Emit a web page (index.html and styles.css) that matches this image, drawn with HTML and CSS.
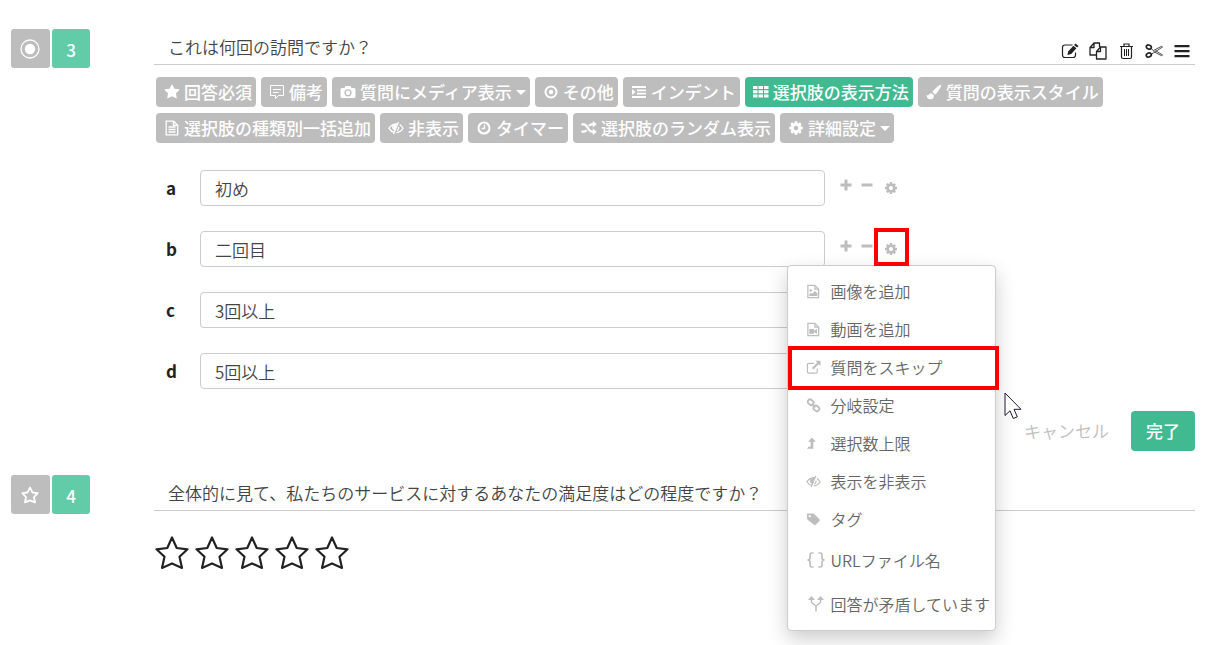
FILE: index.html
```html
<!DOCTYPE html>
<html lang="ja">
<head>
<meta charset="utf-8">
<meta name="viewport" content="width=device-width, initial-scale=1">
<title>アンケート編集</title>
<link rel="stylesheet" href="styles.css">
</head>
<body>
<svg class="sprite" aria-hidden="true">
  <symbol id="i-star" viewBox="0 0 1792 1792"><path fill="currentColor" d="M1728 647q0 22-26 48l-363 354 86 500q1 7 1 20 0 21-10.5 35.5t-30.5 14.5q-19 0-40-12l-449-236-449 236q-22 12-40 12-21 0-31.5-14.5t-10.5-35.5q0-6 2-20l86-500-364-354q-25-27-25-48 0-37 56-46l502-73 225-455q19-41 49-41t49 41l225 455 502 73q56 9 56 46z"/></symbol>
  <symbol id="i-gear" viewBox="0 0 1792 1792"><path fill="currentColor" d="M1152 896q0-106-75-181t-181-75-181 75-75 181 75 181 181 75 181-75 75-181zm512-109v222q0 12-8 23t-20 13l-185 28q-19 54-39 91 35 50 107 138 10 12 10 25t-9 23q-27 37-99 108t-94 71q-12 0-26-9l-138-108q-44 23-91 38-16 136-29 186-7 28-36 28h-222q-14 0-24.5-8.5t-11.5-21.5l-28-184q-49-16-90-37l-141 107q-10 9-25 9-14 0-25-11-126-114-165-168-7-10-7-23 0-12 8-23 15-21 51-66.5t54-70.5q-27-50-41-99l-183-27q-13-2-21-12.5t-8-23.5v-222q0-12 8-23t19-13l186-28q14-46 39-92-40-57-107-138-10-12-10-24 0-10 9-23 26-36 98.5-107.5t94.5-71.5q13 0 26 10l138 107q44-23 91-38 16-136 29-186 7-28 36-28h222q14 0 24.5 8.5t11.5 21.5l28 184q49 16 90 37l142-107q9-9 24-9 13 0 25 10 129 119 165 170 7 8 7 22 0 12-8 23-15 21-51 66.5t-54 70.5q26 50 41 98l183 28q13 2 21 12.5t8 23.5z"/></symbol>
  <symbol id="i-star-line" viewBox="0 0 34 34"><path fill="none" stroke="currentColor" stroke-width="2.200" stroke-linejoin="round" d="M17 1.500l4.700 10.500L32.500 13.300l-8 7.400 2.500 11.200L17 27.400l-10 4.500 2.500-11.200-8-7.400L12.300 12z"/></symbol>
  <symbol id="i-star-bold" viewBox="0 0 34 34"><path fill="none" stroke="currentColor" stroke-width="3.500" stroke-linejoin="round" d="M17 3l4.700 9.200L31.500 13.500l-7 7.600 2 10L17 27l-9.500 4.100 2-10-7-7.600 9.800-1.300z"/></symbol>
  <symbol id="i-note" viewBox="0 0 16 16"><g fill="none" stroke="currentColor"><path d="M1.500 1.500h13v10H9.500l-3 3v-3h-5z"/><path d="M4 5.500h8M4 8.500h5.500"/></g></symbol>
  <symbol id="i-camera" viewBox="0 0 16 16"><path fill="currentColor" fill-rule="evenodd" d="M5.500 2h5l1 2H14q1.500 0 1.500 1.500v7Q15.500 14 14 14H2Q.5 14 .5 12.500v-7Q.5 4 2 4h2.500zM8 5.200a3.600 3.600 0 1 0 0 7.200 3.600 3.600 0 0 0 0-7.200zm0 1.300a2.300 2.300 0 1 1 0 4.600 2.300 2.300 0 0 1 0-4.600z"/></symbol>
  <symbol id="i-dot" viewBox="0 0 16 16"><circle cx="8" cy="8" r="5.500" fill="none" stroke="currentColor" stroke-width="2"/><circle cx="8" cy="8" r="2.200" fill="currentColor"/></symbol>
  <symbol id="i-indent" viewBox="0 0 16 16"><path fill="currentColor" d="M1 2h14v2H1zM6 5.500h9v1.800H6zM6 8.800h9v1.800H6zM1 12h14v2H1zM1 5l3.500 3L1 11z"/></symbol>
  <symbol id="i-grid" viewBox="0 0 16 16"><path fill="currentColor" d="M0 2h4.500v3H0zM5.500 2H10v3H5.500zM11 2h4.500v3H11zM0 6.300h4.500v3H0zM5.500 6.300H10v3H5.500zM11 6.300h4.500v3H11zM0 10.600h4.500v3H0zM5.500 10.600H10v3H5.500zM11 10.600h4.500v3H11z"/></symbol>
  <symbol id="i-brush" viewBox="0 0 16 16"><path fill="currentColor" d="M14.600.8q1 .7.300 2.200l-4 6q-.8 1.200-2 1.500L6.500 8.300q.2-1.100 1.200-2l5.300-5q.9-.9 1.600-.5zM5.600 9.200l2.500 2.400q0 3.600-3.700 3.600Q.8 15.200.5 11q1.100.8 1.800.2.800-2 3.300-2z"/></symbol>
  <symbol id="i-doc" viewBox="0 0 16 16"><path fill="none" stroke="currentColor" stroke-width="1.300" d="M2.200 1.200h7.500l4 4v9.600H2.200zM9.500 1.200v4.200h4.200M4.500 7h7M4.500 9.500h7M4.500 12h7"/></symbol>
  <symbol id="i-eye" viewBox="0 0 16 16"><path fill="none" stroke="currentColor" stroke-width="1.300" d="M6.200 12.300Q3 11.500 1 8.300 3.200 4.200 8 3.800l1.800.2M11.600 4.700q2 1 3.400 3.600-2.100 4-6.700 4.300M10.500 2L5.500 14M5 5.500q-1 3 1.700 4.500M10.700 7q.4 2.300-1.600 3.600"/><path fill="currentColor" d="M5.500 5q2-1.300 3.300-.5L7.300 10Q4.600 8.500 5.500 5z"/></symbol>
  <symbol id="i-clock" viewBox="0 0 16 16"><circle cx="8" cy="8" r="5.500" fill="none" stroke="currentColor" stroke-width="2.200"/><path fill="none" stroke="currentColor" stroke-width="1.300" d="M8.500 4.800v3.700H5.500"/></symbol>
  <symbol id="i-shuffle" viewBox="0 0 16 16"><path fill="none" stroke="currentColor" stroke-width="2.200" d="M.5 4.300H3C6.500 4.300 7 11.700 11 11.700h2M.5 11.700H3q1.500 0 2.500-1.700M8 6q1-1.700 3-1.700h2"/><path fill="currentColor" d="M11.800 1l4 3.300-4 3.300zM11.800 8.400l4 3.300-4 3.300z"/></symbol>
  <symbol id="i-edit" viewBox="0 0 18 18"><path fill="none" stroke="currentColor" stroke-width="1.200" d="M11.500 3H4Q1.500 3 1.500 5.500V13q0 2.500 2.500 2.500h8q2.500 0 2.500-2.500v-2.500"/><path fill="currentColor" d="M14.500 1.500l3 2.500-1.400 1.600-3-2.500zM12.400 3.800l3 2.500-5.200 5.700-3.700 1 .6-3.600z"/></symbol>
  <symbol id="i-copy" viewBox="0 0 18 18"><path fill="none" stroke="currentColor" stroke-width="1.300" stroke-linejoin="round" d="M7 13H1V5.500L5 1h5.500v4M5 1v4.500H1M11.500 5H17v12H7.500V9.500zM11.500 5v4.500h-4"/></symbol>
  <symbol id="i-trash" viewBox="0 0 18 18"><path fill="none" stroke="currentColor" stroke-width="1.200" d="M3 4.500h13M4.500 4.500V15q0 1.500 1.500 1.500h7q1.500 0 1.500-1.500V4.500M7 4.300V2h5v2.300"/><path fill="none" stroke="currentColor" d="M7.500 7v7M9.500 7v7M11.500 7v7"/></symbol>
  <symbol id="i-cut" viewBox="0 0 18 18"><g fill="none" stroke="currentColor"><ellipse cx="3.800" cy="5" rx="2.600" ry="2" stroke-width="1.700" transform="rotate(25 3.800 5)"/><ellipse cx="3.800" cy="13" rx="2.600" ry="2" stroke-width="1.700" transform="rotate(-25 3.800 13)"/><path stroke-width=".8" d="M6 6.500l2.500 2 8-4.200 1 .7-9 6-2.500 1.200M8.500 9.500l8 4.200 1-.7-7-4.500"/></g></symbol>
  <symbol id="i-menu" viewBox="0 0 18 18"><path fill="currentColor" d="M1.500 3h15v2.200h-15zM1.500 8h15v2.200h-15zM1.500 13h15v2.200h-15z"/></symbol>
  <symbol id="i-plus" viewBox="0 0 12 12"><path fill="currentColor" d="M4.500.5h3v4h4v3h-4v4h-3v-4h-4v-3h4z"/></symbol>
  <symbol id="i-minus" viewBox="0 0 12 12"><path fill="currentColor" d="M.5 4.500h11v3H.5z"/></symbol>
  <symbol id="i-image" viewBox="0 0 16 16"><path fill="none" stroke="currentColor" stroke-width="1.300" d="M2 1.500h7.500l4 4v9H2zM9.500 1.500v4h4"/><circle cx="5" cy="7" r="1.300" fill="currentColor"/><path fill="currentColor" d="M3.500 12.800v-2l1.500-1.300 1.500 1 3-3 2.700 2.500v2.800z"/></symbol>
  <symbol id="i-video" viewBox="0 0 16 16"><path fill="none" stroke="currentColor" stroke-width="1.300" d="M2 1.500h7.500l4 4v9H2zM9.500 1.500v4h4"/><path fill="currentColor" d="M3.500 7.500h5v1.800l3.200-2v5.400l-3.200-2v1.800h-5z"/></symbol>
  <symbol id="i-external" viewBox="0 0 16 16"><path fill="none" stroke="currentColor" stroke-width="1.300" d="M8.500 3.500H3Q1.500 3.500 1.500 5v7.500Q1.500 14 3 14h7.500q1.500 0 1.500-1.500V9"/><path fill="currentColor" d="M10 .8h5.500v5.500l-1.900-1.900-5.800 5.800-1.600-1.600L12 2.800z"/></symbol>
  <symbol id="i-link" viewBox="0 0 16 16"><g fill="none" stroke="currentColor" stroke-width="1.900"><rect x="1.500" y="2" width="6.500" height="5" rx="2.400" transform="rotate(40 4.800 4.800)"/><rect x="7.800" y="8.500" width="6.500" height="5" rx="2.400" transform="rotate(40 11 11)"/><path d="M6 6l4 4"/></g></symbol>
  <symbol id="i-up" viewBox="0 0 16 16"><path fill="currentColor" d="M6.300 1.500l4.200 4.700H7.800v7.300H1l1.700-2h2.200V6.200H2.200z"/></symbol>
  <symbol id="i-tag" viewBox="0 0 16 16"><path fill="currentColor" fill-rule="evenodd" d="M1 2.500Q1 1.500 2 1.500h5q1 0 2 1l5.300 5.300q.9.900 0 1.800l-4 4q-.9.900-1.800 0L2 8.500q-1-1-1-2zM4 3.200a1.200 1.200 0 1 0 0 2.400 1.200 1.200 0 0 0 0-2.400z"/></symbol>
  <symbol id="i-braces" viewBox="0 0 20 16"><path fill="none" stroke="currentColor" stroke-width="1.600" d="M7.500 1H6Q4 1 4 3v2.500Q4 8 1.500 8 4 8 4 10.500V13q0 2 2 2h1.500M12.500 1H14q2 0 2 2v2.500Q16 8 18.500 8 16 8 16 10.500V13q0 2-2 2h-1.500"/></symbol>
  <symbol id="i-fork" viewBox="0 0 20 16"><path fill="none" stroke="currentColor" stroke-width="1.500" d="M10 15.500V10L5.500 6.500V3M10 10l4.500-3.500V3"/><path fill="currentColor" d="M5.500 0L9 4H2zM14.500 0L18 4h-7z"/></symbol>
</svg>

<main class="survey">
  <section class="question">
    <div class="badges">
      <span class="badge badge-type"><svg class="badge-radio" viewBox="0 0 20 20"><circle cx="10" cy="10" r="9" fill="none" stroke="currentColor" stroke-width="1.300"/><circle cx="10" cy="10" r="5.200" fill="currentColor"/></svg></span>
      <span class="badge badge-number">3</span>
    </div>
    <div class="content">
      <header class="heading">
        <h2 class="title">これは何回の訪問ですか？</h2>
        <div class="actions">
          <button class="icon-button" type="button" aria-label="編集"><svg><use href="#i-edit"/></svg></button>
          <button class="icon-button" type="button" aria-label="コピー"><svg><use href="#i-copy"/></svg></button>
          <button class="icon-button" type="button" aria-label="削除"><svg><use href="#i-trash"/></svg></button>
          <button class="icon-button" type="button" aria-label="切り取り"><svg><use href="#i-cut"/></svg></button>
          <button class="icon-button" type="button" aria-label="並べ替え"><svg><use href="#i-menu"/></svg></button>
        </div>
      </header>

      <div class="toolbar">
        <button class="tool" type="button"><svg><use href="#i-star"/></svg>回答必須</button>
        <button class="tool" type="button"><svg><use href="#i-note"/></svg>備考</button>
        <button class="tool tool-drop" type="button"><svg><use href="#i-camera"/></svg>質問にメディア表示</button>
        <button class="tool" type="button"><svg><use href="#i-dot"/></svg>その他</button>
        <button class="tool" type="button"><svg><use href="#i-indent"/></svg>インデント</button>
        <button class="tool tool-active" type="button"><svg><use href="#i-grid"/></svg>選択肢の表示方法</button>
        <button class="tool" type="button"><svg><use href="#i-brush"/></svg>質問の表示スタイル</button>
        <button class="tool" type="button"><svg><use href="#i-doc"/></svg>選択肢の種類別一括追加</button>
        <button class="tool" type="button"><svg><use href="#i-eye"/></svg>非表示</button>
        <button class="tool" type="button"><svg><use href="#i-clock"/></svg>タイマー</button>
        <button class="tool" type="button"><svg><use href="#i-shuffle"/></svg>選択肢のランダム表示</button>
        <button class="tool tool-drop" type="button"><svg><use href="#i-gear"/></svg>詳細設定</button>
      </div>

      <div class="options">
        <div class="option">
          <label class="option-label" for="opt-a">a</label>
          <input class="option-input" id="opt-a" type="text" value="初め">
          <div class="option-tools">
            <button class="mini" type="button" aria-label="追加"><svg><use href="#i-plus"/></svg></button>
            <button class="mini" type="button" aria-label="削除"><svg><use href="#i-minus"/></svg></button>
            <button class="mini mini-gear" type="button" aria-label="設定"><svg><use href="#i-gear"/></svg></button>
          </div>
        </div>
        <div class="option">
          <label class="option-label" for="opt-b">b</label>
          <input class="option-input" id="opt-b" type="text" value="二回目">
          <div class="option-tools">
            <button class="mini" type="button" aria-label="追加"><svg><use href="#i-plus"/></svg></button>
            <button class="mini" type="button" aria-label="削除"><svg><use href="#i-minus"/></svg></button>
            <button class="mini mini-gear marked" type="button" aria-label="設定"><svg><use href="#i-gear"/></svg></button>
            <div class="menu">
              <button class="menu-item" type="button"><svg><use href="#i-image"/></svg>画像を追加</button>
              <button class="menu-item" type="button"><svg><use href="#i-video"/></svg>動画を追加</button>
              <button class="menu-item marked" type="button"><svg><use href="#i-external"/></svg>質問をスキップ</button>
              <button class="menu-item" type="button"><svg><use href="#i-link"/></svg>分岐設定</button>
              <button class="menu-item" type="button"><svg><use href="#i-up"/></svg>選択数上限</button>
              <button class="menu-item" type="button"><svg><use href="#i-eye"/></svg>表示を非表示</button>
              <button class="menu-item" type="button"><svg><use href="#i-tag"/></svg>タグ</button>
              <button class="menu-item menu-item-tall" type="button"><svg><use href="#i-braces"/></svg>URLファイル名</button>
              <button class="menu-item menu-item-tall" type="button"><svg><use href="#i-fork"/></svg>回答が矛盾しています</button>
              <svg class="pointer" viewBox="0 0 19 28" aria-hidden="true"><path fill="#fff" stroke="#1a1a2e" d="M1 1v22.500l5-4.700 3.300 7.700 4-1.700-3.300-7.500h7z"/></svg>
            </div>
          </div>
        </div>
        <div class="option">
          <label class="option-label" for="opt-c">c</label>
          <input class="option-input" id="opt-c" type="text" value="3回以上">
        </div>
        <div class="option">
          <label class="option-label" for="opt-d">d</label>
          <input class="option-input" id="opt-d" type="text" value="5回以上">
        </div>
      </div>

      <footer class="footer">
        <button class="cancel" type="button">キャンセル</button>
        <button class="done" type="button">完了</button>
      </footer>
    </div>
  </section>

  <section class="question">
    <div class="badges">
      <span class="badge badge-type"><svg class="badge-star"><use href="#i-star-bold"/></svg></span>
      <span class="badge badge-number">4</span>
    </div>
    <div class="content">
      <header class="heading">
        <h2 class="title">全体的に見て、私たちのサービスに対するあなたの満足度はどの程度ですか？</h2>
      </header>
      <div class="rating">
        <button class="rate" type="button" aria-label="1"><svg><use href="#i-star-line"/></svg></button>
        <button class="rate" type="button" aria-label="2"><svg><use href="#i-star-line"/></svg></button>
        <button class="rate" type="button" aria-label="3"><svg><use href="#i-star-line"/></svg></button>
        <button class="rate" type="button" aria-label="4"><svg><use href="#i-star-line"/></svg></button>
        <button class="rate" type="button" aria-label="5"><svg><use href="#i-star-line"/></svg></button>
      </div>
    </div>
  </section>
</main>
</body>
</html>
```
FILE: styles.css
```css
* {
  box-sizing: border-box;
}

body {
  margin: 0;
  background: #fff;
  color: #444;
  font-family: "Noto Sans CJK JP", "Noto Sans", sans-serif;
  font-size: 17px;
  font-weight: 350;
  line-height: 24px;
}

button,
input {
  margin: 0;
  font: inherit;
}

button {
  padding: 0;
  border: 0;
  background: none;
  color: inherit;
  cursor: pointer;
}

svg {
  display: block;
  flex: none;
}

.sprite {
  position: absolute;
  width: 0;
  height: 0;
}

.survey {
  display: flex;
  flex-direction: column;
  gap: 24px;
  min-height: 100vh;
  padding: 29px 19px 24px 11px;
}

.question {
  display: grid;
  grid-template-columns: auto 1fr;
  column-gap: 64px;
  align-items: start;
}

.badges {
  display: flex;
  gap: 2px;
}

.badge {
  display: flex;
  align-items: center;
  justify-content: center;
  width: 39px;
  height: 39px;
  border-radius: 3px;
  color: #fff;
}

.badge-type {
  padding-right: 1px;
  background: #bdbdbd;
}

.badge-number {
  width: 38px;
  padding-top: 2px;
  background: #62cca8;
  font-weight: 500;
}

.badge-radio {
  width: 20px;
  height: 20px;
}

.badge-star {
  width: 18px;
  height: 18px;
}

.heading {
  display: flex;
  align-items: center;
  justify-content: space-between;
  min-height: 36px;
  border-bottom: 1px solid #ccc;
}

.title {
  margin: 0;
  padding-left: 14px;
  font-size: 17px;
  font-weight: 350;
}

.actions {
  display: flex;
  gap: 10px;
  padding: 8px 4px 0 0;
  color: #222;
}

.icon-button svg {
  width: 18px;
  height: 18px;
}

.toolbar {
  display: flex;
  flex-wrap: wrap;
  gap: 6px 5px;
  padding: 12px 0 0 2px;
}

.tool {
  display: flex;
  align-items: center;
  gap: 4px;
  height: 30px;
  padding: 0 4px 0 8px;
  border-radius: 4px;
  background: #bdbdbd;
  color: #fff;
  font-weight: 500;
}

.tool svg {
  width: 16px;
  height: 16px;
}

.tool-active {
  background: #41ba91;
}

.tool-drop::after {
  content: "";
  border: 5px solid transparent;
  border-top-color: #fff;
  border-bottom: 0;
}

.options {
  display: flex;
  flex-direction: column;
  gap: 25px;
  padding-top: 27px;
}

.option {
  display: flex;
  align-items: center;
}

.option-label {
  width: 46px;
  padding-left: 12px;
  color: #222;
  font-weight: 700;
}

.option-input {
  width: 60%;
  height: 36px;
  padding: 0 14px;
  border: 1px solid #ccc;
  border-radius: 4px;
  background: #fff;
  color: #444;
}

.option-tools {
  position: relative;
  display: flex;
  align-items: center;
  gap: 9px;
  padding-left: 15px;
  color: #bdbdbd;
}

.mini {
  padding-bottom: 6px;
}

.mini svg {
  width: 12px;
  height: 12px;
}

.mini-gear {
  position: relative;
  padding: 0 2px;
}

.mini-gear svg {
  width: 14px;
  height: 14px;
}

.marked::after {
  content: "";
  position: absolute;
  border: 4px solid #f00;
}

.mini-gear.marked::after {
  z-index: 2;
  inset: -14px -9px -10px -8px;
}

.menu {
  position: absolute;
  z-index: 1;
  top: 25px;
  left: -38px;
  display: flex;
  flex-direction: column;
  width: 209px;
  padding: 6px 0 4px;
  border: 1px solid #ccc;
  border-radius: 4px;
  background: #fff;
  box-shadow: 0 8px 20px rgba(0, 0, 0, 0.2);
}

.menu-item {
  position: relative;
  display: flex;
  align-items: center;
  gap: 10px;
  height: 38px;
  padding-left: 18px;
  color: #666;
  font-size: 16px;
  white-space: nowrap;
}

.menu-item svg {
  width: 15px;
  height: 15px;
  color: #bdbdbd;
}

.menu-item-tall {
  gap: 5px;
  height: 44px;
}

.menu-item-tall svg {
  width: 20px;
  height: 16px;
}

.menu-item.marked::after {
  inset: -2px -4px -4px 0;
}

.pointer {
  position: absolute;
  top: 126px;
  left: 216px;
  width: 19px;
  height: 28px;
}

.footer {
  display: flex;
  align-items: center;
  justify-content: flex-end;
  gap: 22px;
  padding-top: 22px;
}

.cancel {
  color: #bdbdbd;
}

.done {
  height: 40px;
  padding: 0 15px;
  border-radius: 4px;
  background: #41ba91;
  color: #fff;
  font-weight: 500;
}

.rating {
  display: flex;
  gap: 6px;
  padding: 25px 0 0 1px;
  color: #222;
}

.rate svg {
  width: 34px;
  height: 34px;
}
```
